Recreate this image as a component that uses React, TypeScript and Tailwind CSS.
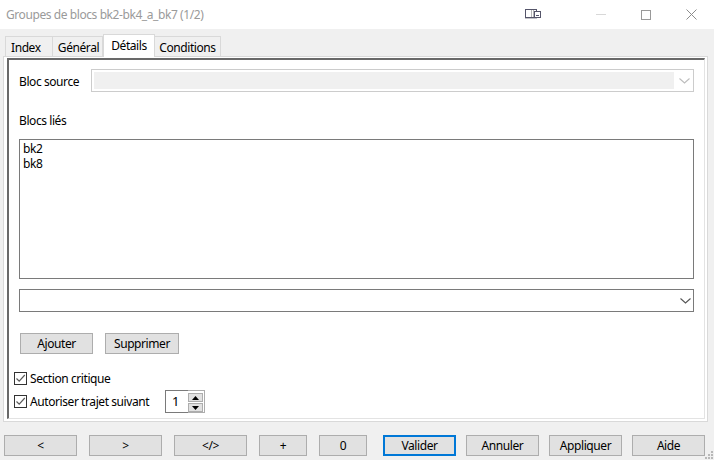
import React from 'react';

const base = 'h-[21px] bg-[#e1e1e1] flex items-center justify-center text-[12px] text-black';
const btn = `${base} border border-[#adadad]`;

const Chevron: React.FC<{ color: string }> = ({ color }) => (
  <svg width="11" height="6" viewBox="0 0 11 6" fill="none" stroke={color} strokeWidth="1.1">
    <path d="M0.5 0.5 L5.5 5 L10.5 0.5" />
  </svg>
);

const Check: React.FC<{ label: string }> = ({ label }) => (
  <div className="flex items-center h-[13px]">
    <div className="w-[13px] h-[13px] border border-[#333333] bg-white flex items-center justify-center">
      <svg width="11" height="11" viewBox="0 0 11 11" fill="none" stroke="#5a5a5a" strokeWidth="1.2">
        <path d="M1.5 5.5 L4.2 8.2 L9.8 2" />
      </svg>
    </div>
    <span className="ml-[3px] text-[12px] text-black whitespace-nowrap">{label}</span>
  </div>
);

const SpinBtn: React.FC<{ up?: boolean }> = ({ up }) => (
  <div className="w-[15px] h-[9px] bg-[#e1e1e1] border border-[#adadad] flex items-center justify-center">
    <svg width="7" height="4" viewBox="0 0 7 4" fill="#000000">
      <path d={up ? 'M3.5 0 L7 4 L0 4 Z' : 'M0 0 L7 0 L3.5 4 Z'} />
    </svg>
  </div>
);

const App: React.FC = () => {
  return (
    <div className="relative w-[714px] h-[460px] overflow-hidden bg-[#f0f0f0] text-[12px] leading-[15px] tracking-[-0.42px] font-['Noto_Sans',sans-serif]">
      {/* Title bar */}
      <div className="h-[29px] bg-white flex items-center pl-[6px]">
        <span className="text-[12px] text-[#9a9a9a] whitespace-nowrap">Groupes de blocs bk2-bk4_a_bk7 (1/2)</span>
        <div className="ml-auto flex items-center h-full">
          <svg width="16" height="11" viewBox="0 0 16 11" fill="none" className="mr-[55px]">
            <rect x="0.5" y="0.5" width="11" height="8" stroke="#55556a" />
            <path d="M0 9.5 H12" stroke="#c4c4c8" />
            <path d="M6.5 1 V8 M8.5 1 V8" stroke="#b5b5b5" />
            <rect x="9.5" y="2.5" width="6" height="6" fill="#ffffff" stroke="#55556a" />
            <path d="M11 6.5 H14" stroke="#55556a" />
          </svg>
          <div className="w-[10px] h-px bg-[#d8d8d8] mr-[35px]" />
          <div className="w-[10px] h-[10px] border border-[#999999] mr-[35px]" />
          <svg width="11" height="11" viewBox="0 0 11 11" stroke="#8c8c8c" className="mr-[17px]">
            <path d="M0.5 0.5 L10.5 10.5 M10.5 0.5 L0.5 10.5" />
          </svg>
        </div>
      </div>

      {/* Tabs */}
      <div className="flex items-end h-[27px] pl-[5px] relative">
        <div className="w-[48px] h-[20px] border border-b-0 border-[#d9d9d9] bg-[#f0f0f0] flex items-center pl-[5px] pt-[1px]">
          Index
        </div>
        <div className="w-[50px] h-[20px] border border-b-0 border-l-0 border-[#d9d9d9] bg-[#f0f0f0] flex items-center justify-center pt-[1px] pl-[2px]">
          Général
        </div>
        <div className="w-[52px] h-[23px] -mb-[1px] z-10 border border-b-0 border-[#d9d9d9] bg-white flex items-center justify-center pb-[2px]">
          Détails
        </div>
        <div className="w-[66px] h-[20px] border border-b-0 border-l-0 border-[#d9d9d9] bg-[#f0f0f0] flex items-center justify-center pt-[1px]">
          Conditions
        </div>
      </div>

      {/* Panel */}
      <div className="ml-[3px] w-[705px] h-[366px] border border-[#d9d9d9] bg-white pl-[3px] pr-[2px] pt-[1px] pb-[2px]">
        <div className="h-full border-t-2 border-l-2 border-r border-b border-t-[#696969] border-l-[#696969] border-r-[#e3e3e3] border-b-[#e3e3e3] pl-[10px]">
          <div className="flex items-center mt-[9px] h-[23px]">
            <span className="w-[72px] whitespace-nowrap pt-[2px]">Bloc source</span>
            <div className="w-[603px] h-[23px] border border-[#cccccc] pl-[2px] pr-[19px] py-[2px] flex relative">
              <div className="flex-1 bg-[#f0f0f0]" />
              <div className="absolute right-[3px] top-[8px]">
                <Chevron color="#bdbdbd" />
              </div>
            </div>
          </div>
          <div className="mt-[21px] h-[15px]">Blocs liés</div>
          <div className="mt-[11px] w-[675px] h-[140px] border border-[#7a7a7a] pl-[3px] pt-[1px]">
            <div>bk2</div>
            <div>bk8</div>
          </div>
          <div className="mt-[10px] w-[675px] h-[23px] border border-[#7a7a7a] flex items-center justify-end pr-[2px]">
            <Chevron color="#555555" />
          </div>
          <div className="flex mt-[21px] ml-[1px] gap-[12px]">
            <div className={`${btn} w-[73px]`}>Ajouter</div>
            <div className={`${btn} w-[74px]`}>Supprimer</div>
          </div>
          <div className="-ml-[5px] mt-[18px]">
            <Check label="Section critique" />
            <div className="flex items-center mt-[5px] h-[23px]">
              <div className="w-[151px]">
                <Check label="Autoriser trajet suivant" />
              </div>
              <div className="flex h-[23px]">
                <div className="w-[23px] h-[23px] border-l border-t border-b border-[#7a7a7a] pl-[6px] leading-[21px] text-[13px]">
                  1
                </div>
                <div className="w-[17px] h-[23px] border-t border-b border-r border-[#adadad] flex flex-col items-start pt-[2px] gap-[1px]">
                  <SpinBtn up />
                  <SpinBtn />
                </div>
              </div>
            </div>
          </div>
        </div>
      </div>

      {/* Bottom buttons */}
      <div className="flex mt-[13px] pl-[4px]">
        <div className={`${btn} w-[73px]`}>&lt;</div>
        <div className={`${btn} w-[73px] ml-[12px]`}>&gt;</div>
        <div className={`${btn} w-[73px] ml-[12px]`}>&lt;/&gt;</div>
        <div className={`${btn} w-[48px] ml-[12px]`}>+</div>
        <div className={`${btn} w-[48px] ml-[12px]`}>0</div>
        <div className={`${base} w-[73px] ml-[16px] border-2 border-[#0078d7]`}>Valider</div>
        <div className={`${btn} w-[73px] ml-[10px]`}>Annuler</div>
        <div className={`${btn} w-[73px] ml-[10px]`}>Appliquer</div>
        <div className={`${btn} w-[73px] ml-[10px]`}>Aide</div>
      </div>

      {/* Resize grip */}
      <svg width="9" height="9" viewBox="0 0 9 9" fill="#b8b8b8" className="absolute right-0 bottom-0">
        <rect x="6" y="0" width="2" height="2" />
        <rect x="3" y="3" width="2" height="2" />
        <rect x="6" y="3" width="2" height="2" />
        <rect x="0" y="6" width="2" height="2" />
        <rect x="3" y="6" width="2" height="2" />
        <rect x="6" y="6" width="2" height="2" />
      </svg>
    </div>
  );
};

export default App;
